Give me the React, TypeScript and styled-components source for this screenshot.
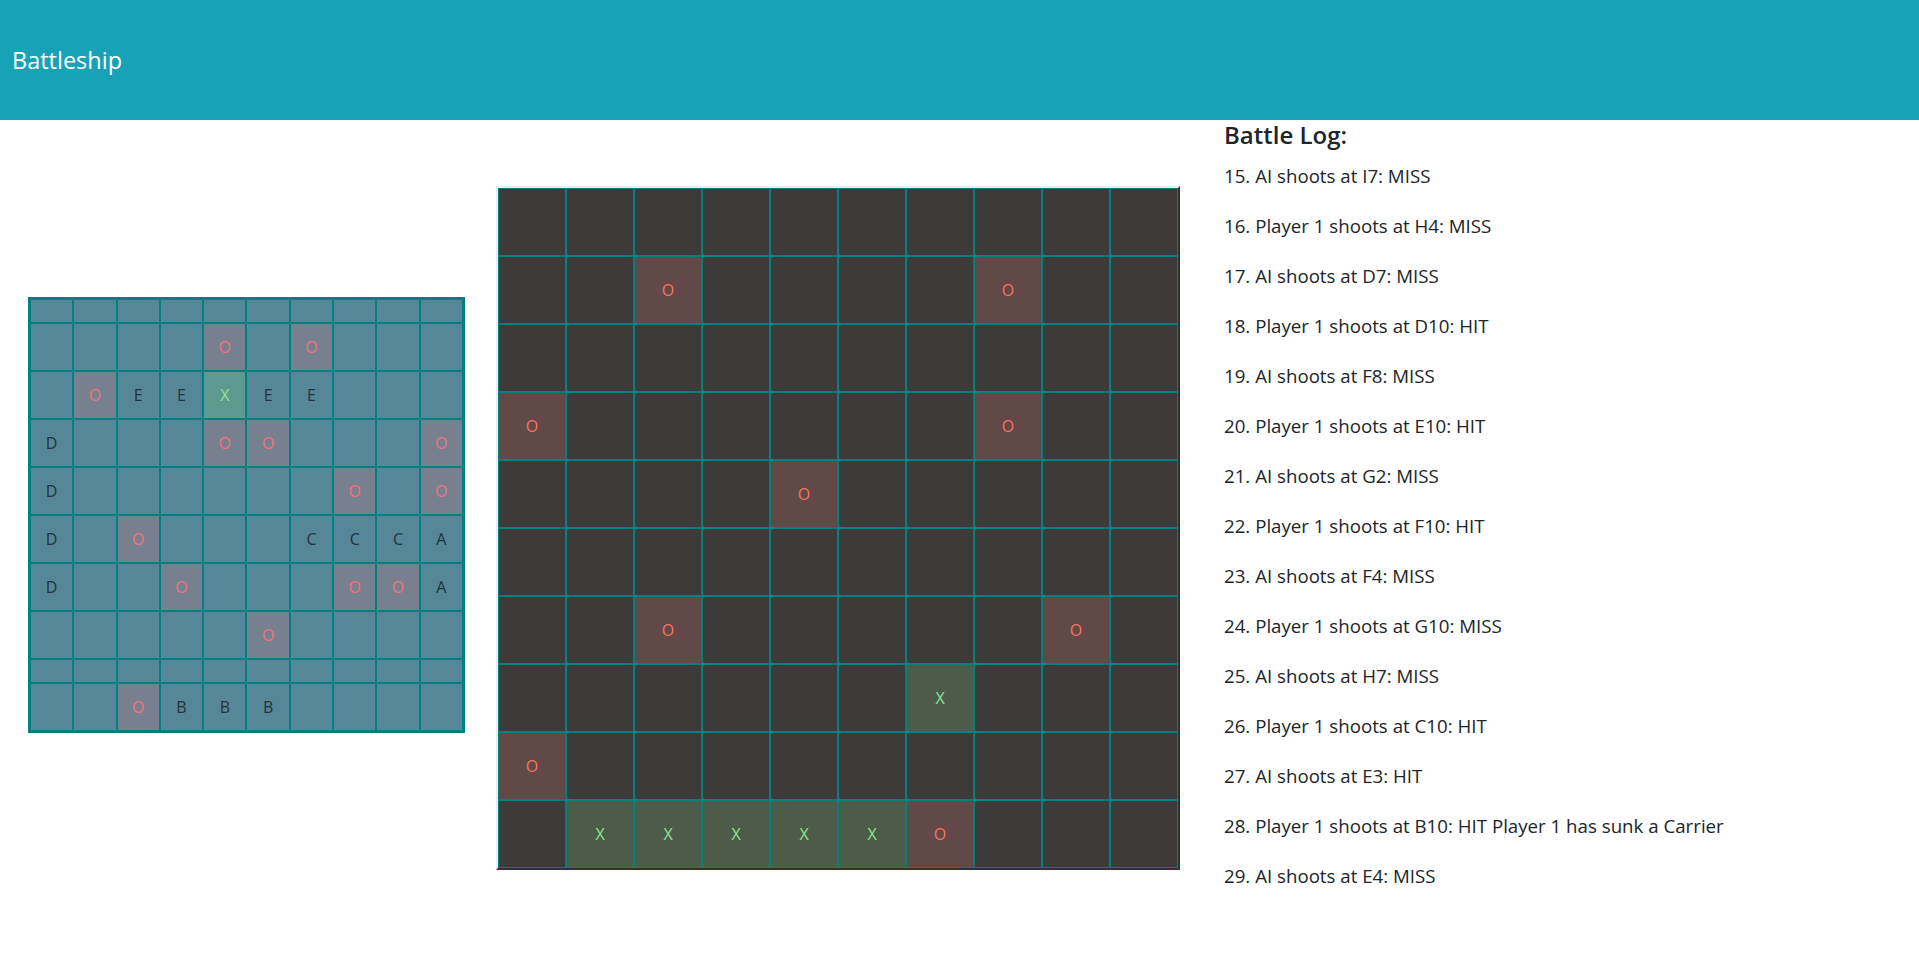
import React from "react";
import styled, { createGlobalStyle } from "styled-components";

type Mark = "" | "O" | "X" | string;

const GlobalStyle = createGlobalStyle`
  body {
    margin: 0;
    font-family: "Segoe UI", "Open Sans", "Noto Sans", sans-serif;
    color: #212529;
    background: #ffffff;
  }
`;

const Header = styled.header`
  height: 120px;
  background-color: #17a2b8;
  display: flex;
  align-items: center;
  padding-left: 12px;
  color: #ffffff;
  font-size: 23.5px;
`;

const Main = styled.main`
  display: flex;
  align-items: center;
`;

const PlayerArea = styled.div`
  padding-left: 28px;
  margin-bottom: 26px;
`;

const EnemyArea = styled.div`
  margin-left: 31px;
`;

/* own board: cells grow with their content, so empty rows stay thin */
const OwnTable = styled.table`
  border: 2px solid #008080;
  border-spacing: 0;
  table-layout: fixed;
  width: 437px;
`;

const OwnCell = styled.td<{ $mark: Mark }>`
  border: 1px solid #008080;
  padding: 11px 0;
  line-height: 24px;
  font-size: 16px;
  text-align: center;
  color: ${(p) =>
    p.$mark === "O" ? "#f2727c" : p.$mark === "X" ? "#8fe58f" : "#26323d"};
  background-color: ${(p) =>
    p.$mark === "O" ? "#76808f" : p.$mark === "X" ? "#5f9a91" : "#558798"};
`;

const EnemyTable = styled.table`
  border-style: solid;
  border-width: 2px;
  border-color: #ececec #333030 #333030 #ececec;
  border-spacing: 0;
  table-layout: fixed;
  background-color: #3e3a39;
`;

const EnemyCell = styled.td<{ $mark: Mark }>`
  border: 1px solid #008080;
  width: 66px;
  height: 66px;
  padding: 0;
  font-size: 16px;
  text-align: center;
  vertical-align: middle;
  color: ${(p) => (p.$mark === "O" ? "#f2735f" : "#8fe58f")};
  background-color: ${(p) =>
    p.$mark === "O" ? "#634848" : p.$mark === "X" ? "#4d5b49" : "#3e3a39"};
`;

const Log = styled.section`
  margin-left: 44px;
  padding-bottom: 22px;
  flex: 1;
`;

const LogTitle = styled.h4`
  margin: 0 0 15px;
  font-size: 24px;
  line-height: 29px;
  font-weight: 600;
`;

const LogEntry = styled.p`
  margin: 0 0 26px;
  font-size: 18.7px;
  line-height: 24px;
`;

const parse = (rows: string[]): Mark[][] =>
  rows.map((r) => r.split("").map((c) => (c === "." ? "" : c)));

const playerBoard = parse([
  "..........",
  "....O.O...",
  ".OEEXEE...",
  "D...OO...O",
  "D......O.O",
  "D.O...CCCA",
  "D..O...OOA",
  ".....O....",
  "..........",
  "..OBBB....",
]);

const enemyBoard = parse([
  "..........",
  "..O....O..",
  "..........",
  "O......O..",
  "....O.....",
  "..........",
  "..O.....O.",
  "......X...",
  "O.........",
  ".XXXXXO...",
]);

const log = [
  "15. AI shoots at I7: MISS",
  "16. Player 1 shoots at H4: MISS",
  "17. AI shoots at D7: MISS",
  "18. Player 1 shoots at D10: HIT",
  "19. AI shoots at F8: MISS",
  "20. Player 1 shoots at E10: HIT",
  "21. AI shoots at G2: MISS",
  "22. Player 1 shoots at F10: HIT",
  "23. AI shoots at F4: MISS",
  "24. Player 1 shoots at G10: MISS",
  "25. AI shoots at H7: MISS",
  "26. Player 1 shoots at C10: HIT",
  "27. AI shoots at E3: HIT",
  "28. Player 1 shoots at B10: HIT Player 1 has sunk a Carrier",
  "29. AI shoots at E4: MISS",
];

export default function App() {
  return (
    <>
      <GlobalStyle />
      <Header>Battleship</Header>
      <Main>
        <PlayerArea>
          <OwnTable>
            <tbody>
              {playerBoard.map((row, r) => (
                <tr key={r}>
                  {row.map((m, c) => (
                    <OwnCell key={c} $mark={m}>
                      {m}
                    </OwnCell>
                  ))}
                </tr>
              ))}
            </tbody>
          </OwnTable>
        </PlayerArea>
        <EnemyArea>
          <EnemyTable>
            <tbody>
              {enemyBoard.map((row, r) => (
                <tr key={r}>
                  {row.map((m, c) => (
                    <EnemyCell key={c} $mark={m}>
                      {m}
                    </EnemyCell>
                  ))}
                </tr>
              ))}
            </tbody>
          </EnemyTable>
        </EnemyArea>
        <Log>
          <LogTitle>Battle Log:</LogTitle>
          {log.map((entry) => (
            <LogEntry key={entry}>{entry}</LogEntry>
          ))}
        </Log>
      </Main>
    </>
  );
}
